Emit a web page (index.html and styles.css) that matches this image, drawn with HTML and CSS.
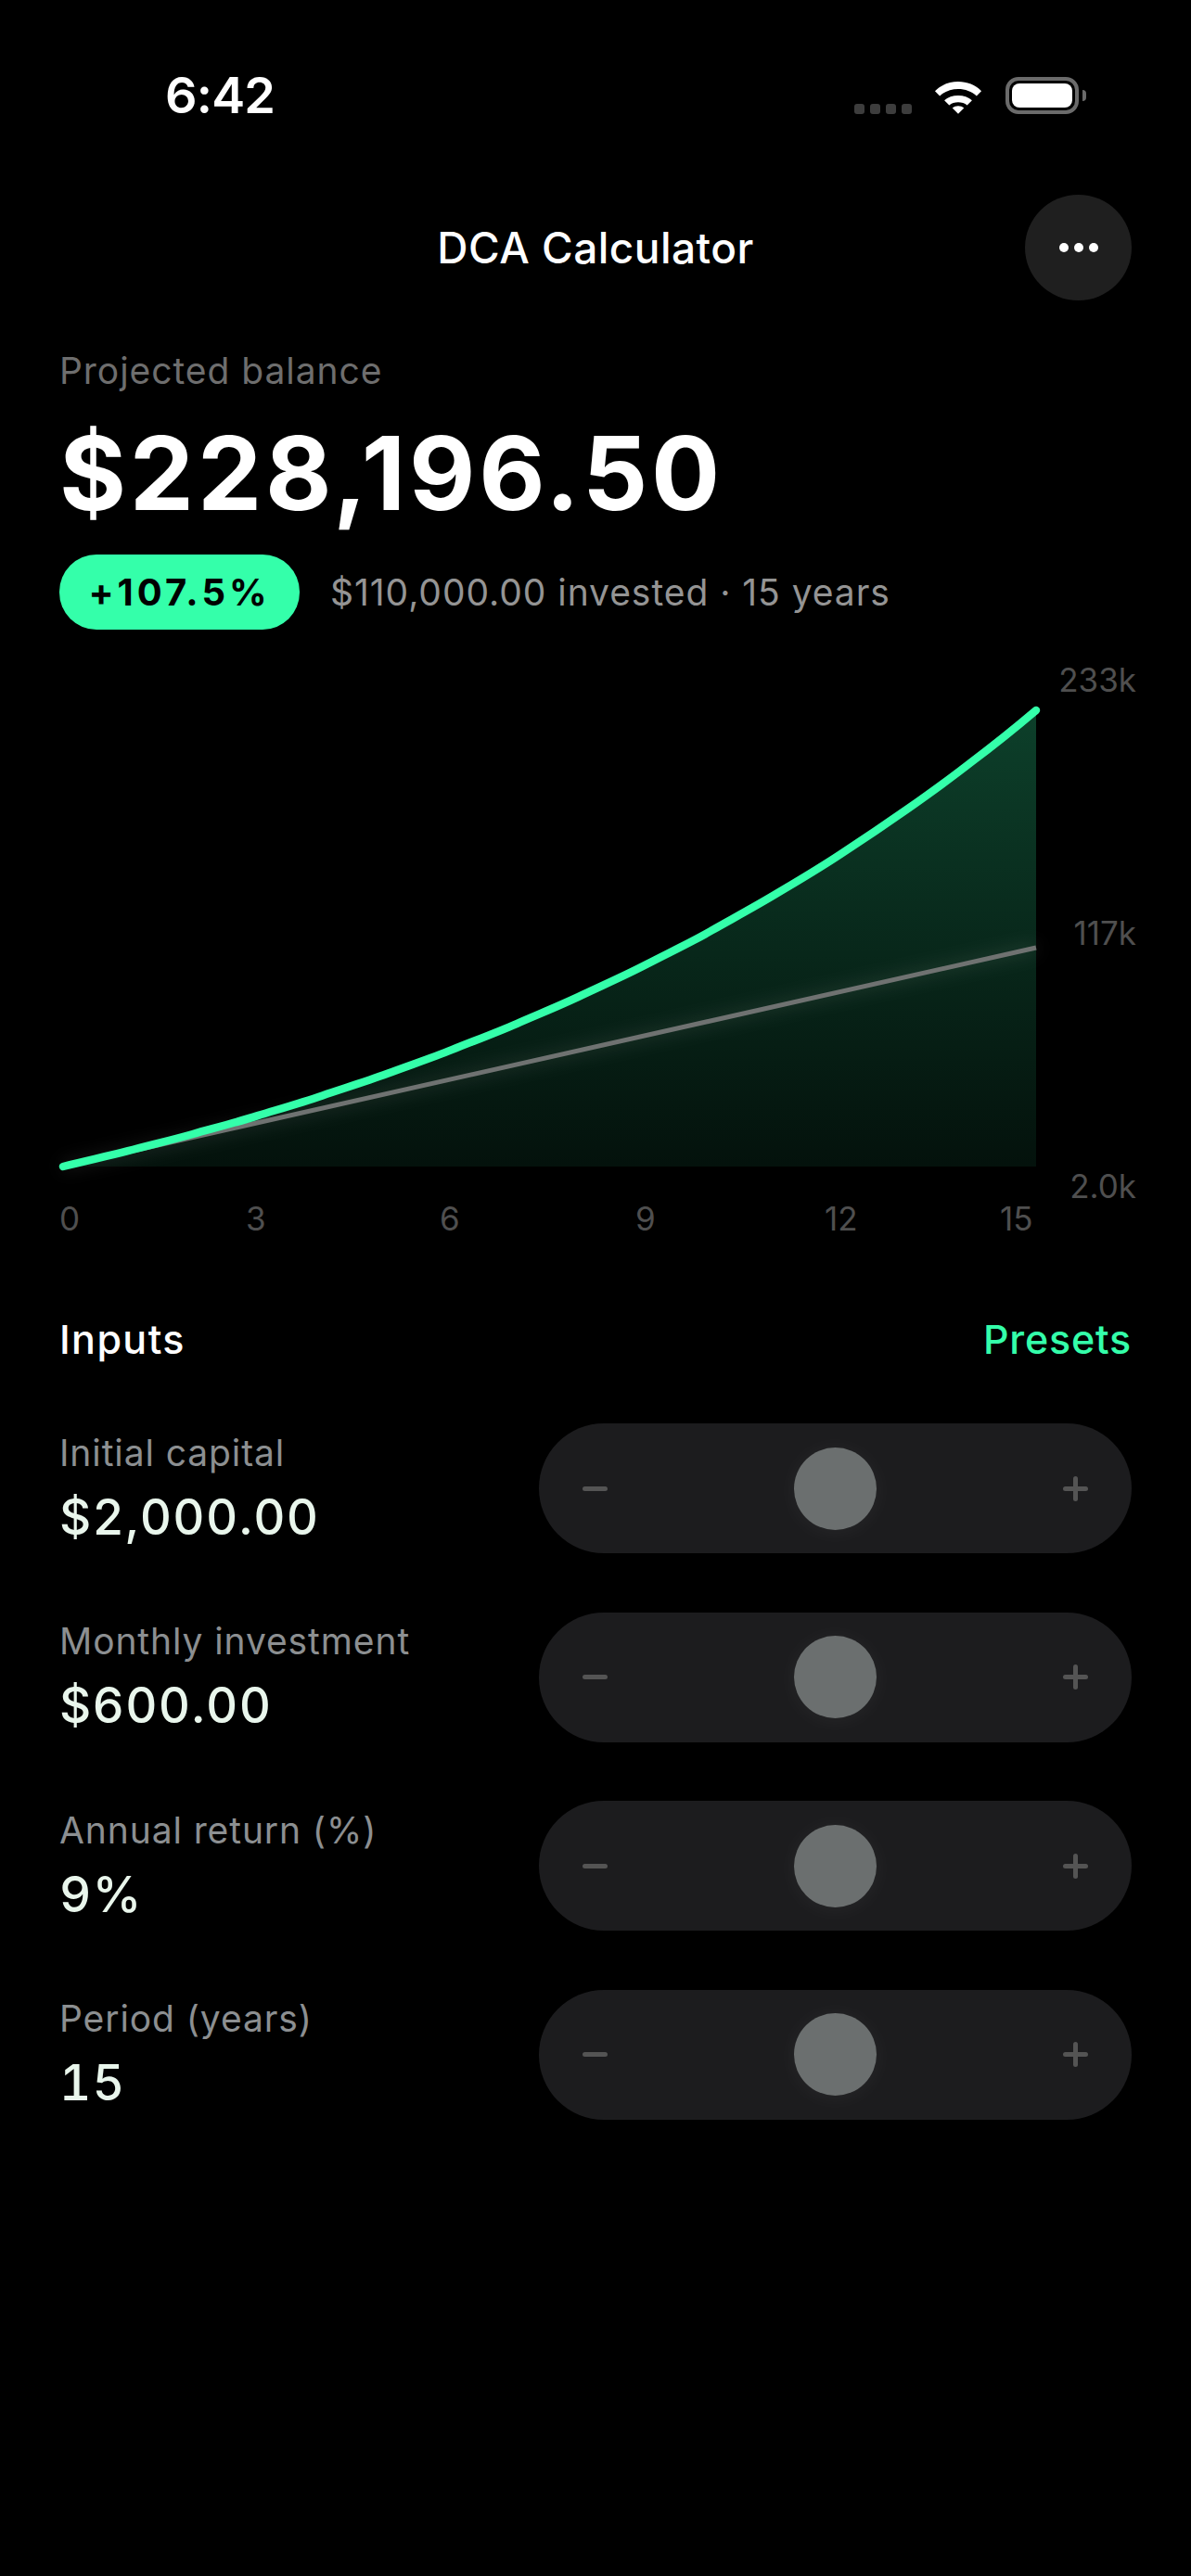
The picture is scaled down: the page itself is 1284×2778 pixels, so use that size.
FILE: index.html
```html
<!DOCTYPE html>
<html lang="en">
<head>
<meta charset="utf-8">
<title>DCA Calculator</title>
<link rel="stylesheet" href="styles.css">
</head>
<body>
<div class="screen">
  <header class="status">
    <span class="time">6:42</span>
    <div class="status-icons">
      <div class="signal"><i></i><i></i><i></i><i></i></div>
      <svg class="wifi" width="52" height="39" viewBox="0 0 54 40">
        <path d="M1 14.5 C14 0.5 40 0.5 53 14.5 L47.6 20 C37 9.5 17 9.5 6.4 20 Z" fill="#fff"/>
        <path d="M11.5 25 C19 17.5 35 17.5 42.5 25 L37 30.5 C32 26 22 26 17 30.5 Z" fill="#fff"/>
        <path d="M20.5 33.5 C24 30.5 30 30.5 33.5 33.5 L27 40 Z" fill="#fff"/>
      </svg>
      <div class="battery"><div class="battery-fill"></div></div>
      <div class="battery-cap"></div>
    </div>
  </header>

  <div class="nav">
    <h1 class="nav-title">DCA Calculator</h1>
    <button class="more" aria-label="More"><i></i><i></i><i></i></button>
  </div>

  <section class="summary">
    <div class="summary-label">Projected balance</div>
    <div class="balance">$228,196.50</div>
    <div class="meta">
      <span class="badge">+107.5%</span>
      <span class="meta-text">$110,000.00 invested · 15 years</span>
    </div>
  </section>

  <section class="chart">
    <svg class="chart-svg" width="1284" height="620" viewBox="0 0 1284 620">
      <defs>
        <linearGradient id="fill" x1="0" y1="0" x2="0" y2="1">
          <stop offset="0" stop-color="#34ffaa" stop-opacity="0.25"/>
          <stop offset="1" stop-color="#34ffaa" stop-opacity="0.07"/>
        </linearGradient>
        <filter id="glow" x="-10%" y="-30%" width="120%" height="160%"><feGaussianBlur stdDeviation="9"/></filter>
      </defs>
      <path d="M68 556 L137.9 539.2 L207.9 521 L277.8 501.1 L347.7 479.4 L417.7 455.8 L487.6 429.9 L557.5 401.8 L627.4 371.2 L697.4 337.8 L767.3 301.4 L837.2 261.7 L907.2 218.5 L977.1 171.3 L1047 120 L1117 64 L1117 556 Z" fill="url(#fill)"/>
      <path d="M68 556 L1117 320" stroke="#fff" stroke-opacity="0.16" stroke-width="6" fill="none" filter="url(#glow)"/>
      <path d="M68 556 L1117 320" stroke="#6f7271" stroke-width="5" fill="none"/>
      <path d="M68 556 C92 550 115 545 137.9 539.2 C161 533 185 527.5 207.9 521 C231 514.5 255 508.5 277.8 501.1 C301 494 324 487.5 347.7 479.4 C371 471.5 394 464.5 417.7 455.8 C441 447 464 439.5 487.6 429.9 C511 420.5 534 412 557.5 401.8 C581 391.5 604 382.5 627.4 371.2 C651 360 674 350 697.4 337.8 C721 325.5 744 314.8 767.3 301.4 C791 288 814 275.7 837.2 261.7 C861 247.5 884 234 907.2 218.5 C931 203 954 187.5 977.1 171.3 C1001 154.5 1024 138 1047 120 C1071 102 1094 83.5 1117 64" stroke="#34ffaa" stroke-width="8.5" stroke-linecap="round" stroke-linejoin="round" fill="none"/>
    </svg>
    <span class="y-label y-top">233k</span>
    <span class="y-label y-mid">117k</span>
    <span class="y-label y-low">2.0k</span>
    <div class="x-axis"><span>0</span><span>3</span><span>6</span><span>9</span><span>12</span><span>15</span></div>
  </section>

  <div class="inputs-head">
    <span class="inputs-title">Inputs</span>
    <span class="presets">Presets</span>
  </div>

  <section class="rows">
    <div class="row">
      <div class="row-text"><div class="row-label">Initial capital</div><div class="row-value">$2,000.00</div></div>
      <div class="stepper"><span class="minus"></span><span class="thumb"></span><span class="plus"></span></div>
    </div>
    <div class="row">
      <div class="row-text"><div class="row-label">Monthly investment</div><div class="row-value">$600.00</div></div>
      <div class="stepper"><span class="minus"></span><span class="thumb"></span><span class="plus"></span></div>
    </div>
    <div class="row">
      <div class="row-text"><div class="row-label">Annual return (%)</div><div class="row-value">9%</div></div>
      <div class="stepper"><span class="minus"></span><span class="thumb"></span><span class="plus"></span></div>
    </div>
    <div class="row">
      <div class="row-text"><div class="row-label">Period (years)</div><div class="row-value">15</div></div>
      <div class="stepper"><span class="minus"></span><span class="thumb"></span><span class="plus"></span></div>
    </div>
  </section>
</div>
</body>
</html>
```
FILE: styles.css
```css
* { box-sizing: border-box; }
html, body { margin: 0; padding: 0; background: #000; }
body { font-family: Inter, "Liberation Sans", sans-serif; color: #fff; }
.screen { width: 1284px; height: 2778px; background: #000; overflow: hidden; }

.status { height: 120px; padding: 77px 0 0 178px; display: flex; justify-content: space-between; position: relative; }
.time { font-size: 54px; line-height: 51px; font-weight: 600; letter-spacing: -0.8px; }
.status-icons { display: flex; align-items: flex-start; padding-top: 6px; margin-right: 113px; }
.signal { display: flex; gap: 6px; margin-top: 29px; margin-right: 24px; }
.signal i { width: 11px; height: 11px; border-radius: 3px; background: #3d3d3d; }
.wifi { margin-top: 1px; margin-right: 25px; }
.battery { width: 79px; height: 40px; border: 4px solid #6b6b6b; border-radius: 14px; padding: 3px; }
.battery-fill { width: 100%; height: 100%; background: #fff; border-radius: 8px; }
.battery-cap { width: 4px; height: 12px; margin-top: 14px; margin-left: 4px; background: #6b6b6b; border-radius: 0 6px 6px 0; }

.nav { height: 114px; margin-top: 90px; position: relative; display: flex; justify-content: center; align-items: center; }
.nav-title { margin: 0; font-size: 46px; font-weight: 500; line-height: 114px; letter-spacing: 0.45px; }
.more { position: absolute; right: 64px; top: 0; width: 115px; height: 114px; border: 0; padding: 0; border-radius: 50%; background: #1f1f1f; display: flex; gap: 6px; align-items: center; justify-content: center; }
.more i { width: 10px; height: 10px; border-radius: 50%; background: #fff; }

.summary { padding: 0 64px; margin-top: 52px; }
.summary-label { font-size: 39px; line-height: 48px; color: #6e6e6e; letter-spacing: 0.95px; }
.balance { font-size: 110px; line-height: 120px; font-weight: 700; margin-top: 26px; letter-spacing: 3.8px; }
.meta { display: flex; align-items: center; margin-top: 28px; gap: 33px; }
.badge { width: 259px; height: 81px; border-radius: 40px; background: #34ffaa; color: #000; font-size: 40px; font-weight: 700; display: flex; align-items: center; justify-content: center; letter-spacing: 4px; }
.meta-text { font-size: 39px; color: #949494; letter-spacing: 0.95px; }

.chart { position: relative; height: 650px; margin-top: 23px; }
.chart-svg { display: block; }
.y-label { position: absolute; right: 59px; font-size: 35px; line-height: 40px; color: #4f4f4f; }
.y-top { top: 11px; }
.y-mid { top: 284px; }
.y-low { top: 557px; }
.x-axis { position: absolute; left: 64px; top: 592px; display: grid; grid-template-columns: 201px 209px 211px 204px 189px auto; font-size: 35px; line-height: 40px; color: #4f4f4f; }

.inputs-head { display: flex; justify-content: space-between; padding: 0 64px; margin-top: 64px; font-size: 43px; line-height: 56px; letter-spacing: 0.8px; }
.inputs-title { font-weight: 500; letter-spacing: 1.4px; }
.presets { color: #34ffaa; font-weight: 500; }

.rows { padding: 0 64px; margin-top: 63px; display: flex; flex-direction: column; gap: 63.6px; }
.row { display: flex; justify-content: space-between; align-items: center; height: 140px; }
.row-label { font-size: 39px; line-height: 48px; color: #8c8f91; letter-spacing: 0.9px; }
.row-value { font-size: 53px; line-height: 64px; font-weight: 500; margin-top: 13px; letter-spacing: 1.3px; color: #e9f6ec; font-variant-numeric: tabular-nums; }
.stepper { width: 639px; height: 140px; border-radius: 70px; background: #1c1c1e; display: flex; align-items: center; justify-content: space-between; padding: 0 47px; }
.minus { width: 27px; height: 5px; border-radius: 3px; background: #545454; }
.plus { width: 27px; height: 27px; position: relative; }
.plus::before { content: ""; position: absolute; left: 0; top: 11px; width: 27px; height: 5px; border-radius: 3px; background: #545454; }
.plus::after { content: ""; position: absolute; left: 11px; top: 0; width: 5px; height: 27px; border-radius: 3px; background: #545454; }
.thumb { width: 89px; height: 89px; border-radius: 50%; background: #6b6f6f; box-shadow: 0 2px 24px rgba(255,255,255,0.05); }
```
